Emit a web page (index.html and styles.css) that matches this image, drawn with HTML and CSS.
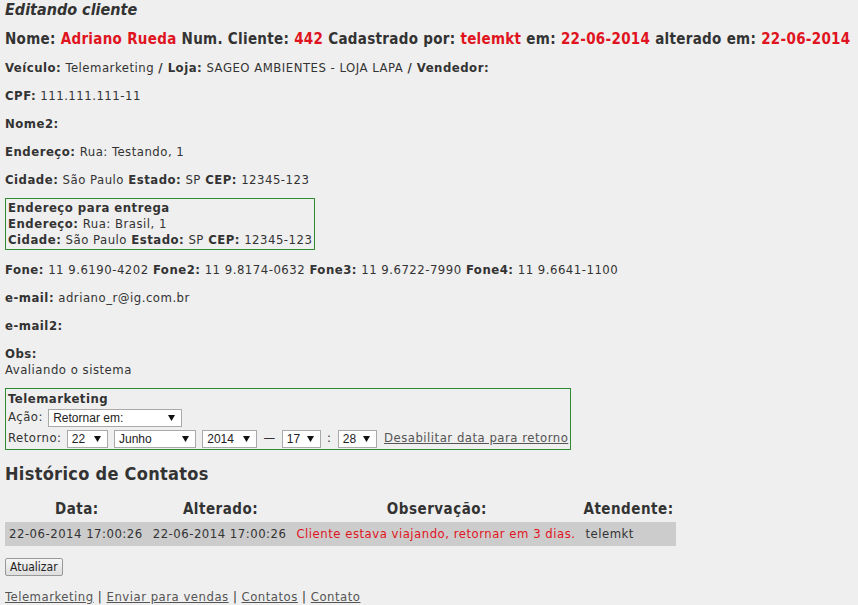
FILE: index.html
```html
<!DOCTYPE html>
<html lang="pt-BR">
  <head>
    <meta charset="UTF-8" />
    <title>Editando cliente</title>
    <link rel="stylesheet" href="styles.css">
  </head>
  <body>
    <h3 class="title">Editando cliente</h3>
    <h4 class="head">
      Nome: <span class="red">Adriano Rueda</span> Num. Cliente: <span class="red">442</span>
      Cadastrado por: <span class="red">telemkt</span> em: <span class="red">22-06-2014</span>
      alterado em: <span class="red">22-06-2014</span>
    </h4>
    <p><b>Veículo:</b> Telemarketing <b>/ Loja:</b> SAGEO AMBIENTES - LOJA LAPA <b>/ Vendedor:</b></p>
    <p><b>CPF:</b> 111.111.111-11</p>
    <p><b>Nome2:</b></p>
    <p><b>Endereço:</b> Rua: Testando, 1</p>
    <p><b>Cidade:</b> São Paulo <b>Estado:</b> SP <b>CEP:</b> 12345-123</p>
    <div class="box">
      <b>Endereço para entrega</b><br>
      <b>Endereço:</b> Rua: Brasil, 1<br>
      <b>Cidade:</b> São Paulo <b>Estado:</b> SP <b>CEP:</b> 12345-123
    </div>
    <p><b>Fone:</b> 11 9.6190-4202 <b>Fone2:</b> 11 9.8174-0632 <b>Fone3:</b> 11 9.6722-7990 <b>Fone4:</b> 11 9.6641-1100</p>
    <p><b>e-mail:</b> adriano_r@ig.com.br</p>
    <p><b>e-mail2:</b></p>
    <p><b>Obs:</b><br>Avaliando o sistema</p>
    <div class="box tele">
      <b>Telemarketing</b><br>
      <div class="line">
        Ação:
        <select class="sel acao"><option>Retornar em:</option></select>
      </div>
      <div class="line">
        Retorno:
        <select class="sel dia"><option>22</option></select>
        <select class="sel mes"><option>Junho</option></select>
        <select class="sel ano"><option>2014</option></select>
        <span class="sep">—</span>
        <select class="sel hora"><option>17</option></select>
        <span class="sep">:</span>
        <select class="sel hora"><option>28</option></select>
        <a href="#" class="desab">Desabilitar data para retorno</a>
      </div>
    </div>
    <h3 class="hist">Histórico de Contatos</h3>
    <table class="contatos">
      <tr>
        <th>Data:</th>
        <th>Alterado:</th>
        <th>Observação:</th>
        <th>Atendente:</th>
      </tr>
      <tr class="row">
        <td>22-06-2014 17:00:26</td>
        <td>22-06-2014 17:00:26</td>
        <td class="red">Cliente estava viajando, retornar em 3 dias.</td>
        <td>telemkt</td>
      </tr>
    </table>
    <button class="btn">Atualizar</button>
    <div class="links">
      <a href="#">Telemarketing</a> | <a href="#">Enviar para vendas</a> | <a href="#">Contatos</a> | <a href="#">Contato</a>
    </div>
  </body>
</html>
```
FILE: styles.css
```css
body {
  margin: 0 5px;
  background-color: #efefef;
  color: #333;
  font-family: "DejaVu Sans Condensed", "DejaVu Sans", sans-serif;
  font-size: 13px;
  line-height: 16px;
  letter-spacing: 0.5px;
}
.red {
  color: #e0141e;
}
.title {
  font-size: 16px;
  font-style: italic;
  font-weight: bold;
  margin: 0;
  padding-top: 1px;
  line-height: 18px;
  letter-spacing: 0;
}
.head {
  font-size: 15px;
  font-weight: bold;
  margin: 11px 0 12px;
  line-height: 18px;
  letter-spacing: 0.3px;
}
p {
  margin: 0 0 12px;
}
.box {
  width: fit-content;
  border: 1px solid #2e8b2e;
  padding: 1px 2px;
  margin: -2px 0 12px;
}
.tele {
  padding: 2px 2px 1px;
}
.line {
  margin-top: 2px;
  height: 18px;
}
.line + .line {
  margin-top: 3px;
}
.sel {
  appearance: none;
  -webkit-appearance: none;
  font-family: "Liberation Sans", Arial, sans-serif;
  font-size: 12px;
  letter-spacing: 0;
  height: 18px;
  background: #fff url("data:image/svg+xml,%3Csvg xmlns='http://www.w3.org/2000/svg' width='7' height='6'%3E%3Cpath d='M0 0h7L3.5 6z' fill='%23111'/%3E%3C/svg%3E") no-repeat right 6px center;
  border: 1px solid #a9a9a9;
  color: #222;
  padding: 0 0 0 4px;
  margin: 0 1px;
  vertical-align: top;
}
.acao {
  width: 134px;
}
.dia {
  width: 41px;
}
.mes {
  width: 82px;
}
.ano {
  width: 55px;
}
.hora {
  width: 39px;
}
.sep {
  margin: 0 1px;
}
.desab {
  margin-left: 2px;
}
a {
  color: #555;
}
.hist {
  font-size: 18px;
  font-weight: bold;
  margin: 14px 0 17px;
  line-height: 20px;
  letter-spacing: 0.3px;
}
.contatos {
  border-collapse: collapse;
  margin: 0;
}
.contatos th {
  font-size: 15px;
  text-align: center;
  padding: 0 2px 5px;
}
.contatos td {
  padding: 4px 6px 4px 4px;
  white-space: nowrap;
  height: 15px;
}
.row {
  background-color: #ccc;
}
.btn {
  margin-top: 12px;
  font-family: "DejaVu Sans Condensed", sans-serif;
  font-size: 12px;
  padding: 1px 4px;
  border: 1px solid #999;
  border-radius: 2px;
  background: linear-gradient(#f6f6f6, #dedede);
  color: #222;
}
.links {
  margin-top: 13px;
}
```
